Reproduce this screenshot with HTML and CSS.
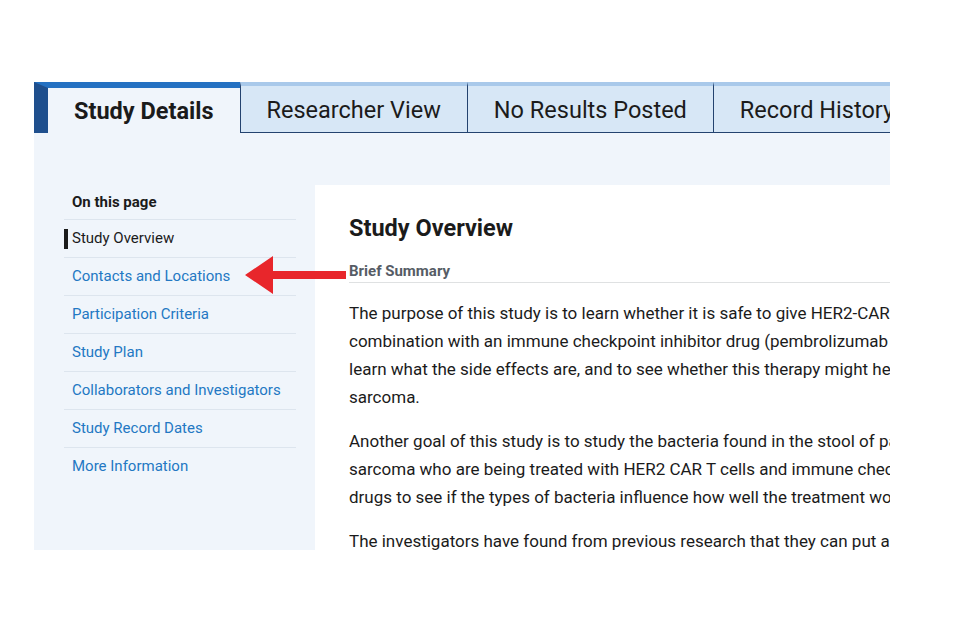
FILE: index.html
```html
<!DOCTYPE html>
<html lang="en">
<head>
<meta charset="utf-8">
<title>Study Details</title>
<link rel="stylesheet" href="styles.css">
</head>
<body>
<div class="page">
  <div class="frame">
    <div class="tabs">
      <div class="tab active">Study Details</div>
      <div class="tab">Researcher View</div>
      <div class="tab">No Results Posted</div>
      <div class="tab">Record History</div>
    </div>
    <div class="content">
      <nav class="sidebar">
        <div class="nav-title">On this page</div>
        <ul class="nav-list">
          <li class="nav-item current">Study Overview</li>
          <li class="nav-item">Contacts and Locations</li>
          <li class="nav-item">Participation Criteria</li>
          <li class="nav-item">Study Plan</li>
          <li class="nav-item">Collaborators and Investigators</li>
          <li class="nav-item">Study Record Dates</li>
          <li class="nav-item last">More Information</li>
        </ul>
      </nav>
      <main class="card">
        <h1 class="card-title">Study Overview</h1>
        <h2 class="section-label">Brief Summary</h2>
        <p class="para">The purpose of this study is to learn whether it is safe to give HER2-CAR T cells in<br>combination with an immune checkpoint inhibitor drug (pembrolizumab or nivolumab). We also want to<br>learn what the side effects are, and to see whether this therapy might help patients with HER2-positive<br>sarcoma.</p>
        <p class="para">Another goal of this study is to study the bacteria found in the stool of patients with HER2-positive<br>sarcoma who are being treated with HER2 CAR T cells and immune checkpoint inhibitor<br>drugs to see if the types of bacteria influence how well the treatment works.</p>
        <p class="para">The investigators have found from previous research that they can put a new gene into T cells</p>
      </main>
    </div>
    <svg class="arrow" width="102" height="40" viewBox="0 0 102 40" aria-hidden="true">
      <polygon points="0,20 28,1 28,16 101,16 101,24 28,24 28,39" fill="#e8262b"/>
    </svg>
  </div>
</div>
</body>
</html>
```

FILE: styles.css
```css
html, body {
  margin: 0;
  padding: 0;
  background: #ffffff;
}

body {
  font-family: Roboto, "Liberation Sans", Arial, sans-serif;
  color: #1b1b1b;
}

.page {
  padding: 82px 0 0 34px;
}

.frame {
  position: relative;
  width: 856px;
  height: 468px;
  overflow: hidden;
  background: #f0f5fb;
}

.tabs {
  display: flex;
  height: 51px;
  white-space: nowrap;
}

.tab {
  flex-shrink: 0;
  box-sizing: border-box;
  height: 51px;
  display: flex;
  align-items: center;
  padding: 1px 26px 0 26px;
  font-size: 23.5px;
  background: #d7e7f6;
  border-top: 4px solid #a9c9ea;
  border-left: 1px solid #24436f;
  border-bottom: 1px solid #24436f;
}

.tab.active {
  font-weight: 700;
  background: #f0f5fb;
  border-top: 6px solid #2471c2;
  border-left: 14px solid #1f4f8d;
  border-bottom: none;
  padding: 0 26px 0 26px;
}

.content {
  display: flex;
  padding-top: 52px;
  height: 365px;
}

.sidebar {
  flex: 0 0 281px;
  box-sizing: border-box;
  padding: 0 19px 0 30px;
}

.nav-title {
  box-sizing: border-box;
  height: 35px;
  line-height: 34px;
  padding-left: 8px;
  font-size: 15px;
  font-weight: 700;
  color: #1b1b1b;
  border-bottom: 1px solid #dde5ee;
}

.nav-list {
  list-style: none;
  margin: 0;
  padding: 0;
}

.nav-item {
  position: relative;
  box-sizing: border-box;
  height: 38px;
  line-height: 37px;
  padding-left: 8px;
  font-size: 15px;
  color: #2378c3;
  border-bottom: 1px solid #dde5ee;
}

.nav-item.last {
  border-bottom: none;
}

.nav-item.current {
  color: #1b1b1b;
}

.nav-item.current::before {
  content: "";
  position: absolute;
  left: 0;
  top: 9px;
  width: 4px;
  height: 20px;
  background: #1b1b1b;
}

.card {
  flex: 0 0 auto;
  width: 800px;
  box-sizing: border-box;
  background: #ffffff;
  padding: 27px 0 0 34px;
}

.card-title {
  margin: 0;
  font-size: 23.5px;
  font-weight: 700;
  line-height: 32px;
  color: #1b1b1b;
}

.section-label {
  margin: 16px 0 0 0;
  padding: 1px 0 1px 0;
  font-size: 15px;
  line-height: 20px;
  font-weight: 700;
  color: #565c65;
  border-bottom: 1px solid #dfe1e2;
}

.para {
  margin: 16px 0 0 0;
  font-size: 17px;
  line-height: 28px;
  color: #1b1b1b;
  white-space: nowrap;
}

.arrow {
  position: absolute;
  left: 211px;
  top: 173px;
}
```
